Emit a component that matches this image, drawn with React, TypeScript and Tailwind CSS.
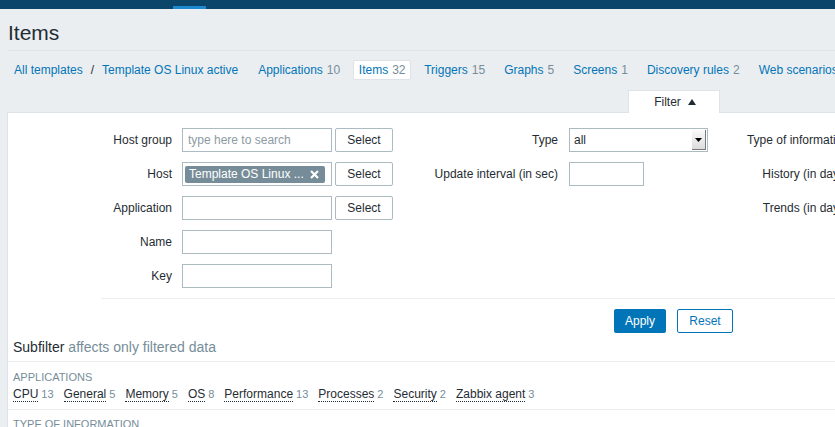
import React from 'react';

const navItems = [
  { name: 'Applications', count: '10' },
  { name: 'Items', count: '32', active: true },
  { name: 'Triggers', count: '15', afterActive: true },
  { name: 'Graphs', count: '5', afterActive: true },
  { name: 'Screens', count: '1', afterActive: true },
  { name: 'Discovery rules', count: '2', afterActive: true },
  { name: 'Web scenarios', count: '', afterActive: true },
];

const apps = [
  { name: 'CPU', count: '13' },
  { name: 'General', count: '5' },
  { name: 'Memory', count: '5' },
  { name: 'OS', count: '8' },
  { name: 'Performance', count: '13' },
  { name: 'Processes', count: '2' },
  { name: 'Security', count: '2' },
  { name: 'Zabbix agent', count: '3' },
];

const Label = ({ text, w }: { text: string; w: string }) => (
  <div className={`${w} shrink-0 text-right whitespace-nowrap`}>{text}</div>
);

const SelectBtn = () => (
  <button className="ml-[3px] w-[58px] h-[24px] border border-[#acbbc2] bg-white text-[#1f2c33] text-[12px] rounded-[2px]">
    Select
  </button>
);

const App = () => {
  return (
    <div className="w-[835px] h-[427px] overflow-hidden bg-[#ebeef1] font-['Liberation_Sans',Arial,sans-serif] text-[12px] text-[#1f2c33]">
      {/* top bar */}
      <div className="h-[9px] bg-[#0b466a] flex items-end pl-[173px]">
        <div className="w-[33px] h-[3px] bg-[#1b88d0]" />
      </div>

      {/* title */}
      <div className="ml-[7px] h-[42px] pt-[13px] pl-[1px] border-b border-[#dde3e7]">
        <h1 className="text-[21px] leading-[21px] text-[#1f2c33]">Items</h1>
      </div>

      {/* navigation */}
      <div className="pt-[9px] pl-[8px] flex items-center whitespace-nowrap h-[20px] box-content">
        <a className="shrink-0 px-[6px] h-[20px] flex items-center text-[#0275b8]">All templates</a>
        <span className="shrink-0 text-[#1f2c33] mx-[2px]">/</span>
        <a className="shrink-0 px-[6px] h-[20px] flex items-center text-[#0275b8]">Template OS Linux active</a>
        {navItems.map((n) => (
          <div
            key={n.name}
            className={`shrink-0 h-[20px] flex items-center gap-[4px] ${
              n.active
                ? 'ml-[7px] w-[58px] justify-center bg-white border border-[#dde3e7] rounded-[2px]'
                : n.afterActive
                ? 'ml-[7px] px-[6px]'
                : 'ml-[8px] px-[6px]'
            }`}
          >
            <span className="text-[#0275b8]">{n.name}</span>
            {n.count && <span className="text-[#768d99]">{n.count}</span>}
          </div>
        ))}
      </div>

      {/* filter tab */}
      <div className="mt-[10px] ml-[628px] w-[92px] h-[23px] bg-white border border-b-0 border-[#dde3e7] relative z-10 -mb-[1px] flex items-center justify-center gap-[7px] pl-[2px]">
        <span className="text-[#1f2c33]">Filter</span>
        <svg width="8" height="6" viewBox="0 0 8 6">
          <path d="M0 6 L4 0 L8 6 Z" fill="#1f2c33" />
        </svg>
      </div>

      {/* panel */}
      <div className="ml-[7px] bg-white border-l border-t border-[#dde3e7] h-[400px]">
        <div className="ml-[93px] pt-[15px] pb-[10px] border-b border-[#ebeef1] flex whitespace-nowrap">
          {/* col 1 */}
          <div className="w-[292px] shrink-0 flex flex-col gap-[10px]">
            <div className="h-[24px] flex items-center">
              <Label text="Host group" w="w-[71px]" />
              <input
                className="ml-[10px] w-[150px] h-[24px] border border-[#acbbc2] px-[5px] text-[12px] placeholder:text-[#8c9ba3] outline-none"
                placeholder="type here to search"
              />
              <SelectBtn />
            </div>
            <div className="h-[24px] flex items-center">
              <Label text="Host" w="w-[71px]" />
              <div className="ml-[10px] w-[150px] h-[24px] border border-[#acbbc2] flex items-center pl-[2px]">
                <div className="w-[140px] h-[17px] bg-[#768d99] rounded-[2px] flex items-center justify-between pl-[4px] pr-[6px] text-white">
                  <span>Template OS Linux ...</span>
                  <svg width="9" height="9" viewBox="0 0 9 9">
                    <path d="M1 1 L8 8 M8 1 L1 8" stroke="white" strokeWidth="2.2" />
                  </svg>
                </div>
              </div>
              <SelectBtn />
            </div>
            <div className="h-[24px] flex items-center">
              <Label text="Application" w="w-[71px]" />
              <input className="ml-[10px] w-[150px] h-[24px] border border-[#acbbc2] px-[5px] outline-none" />
              <SelectBtn />
            </div>
            <div className="h-[24px] flex items-center">
              <Label text="Name" w="w-[71px]" />
              <input className="ml-[10px] w-[150px] h-[24px] border border-[#acbbc2] px-[5px] outline-none" />
            </div>
            <div className="h-[24px] flex items-center">
              <Label text="Key" w="w-[71px]" />
              <input className="ml-[10px] w-[150px] h-[24px] border border-[#acbbc2] px-[5px] outline-none" />
            </div>
          </div>

          {/* col 2 */}
          <div className="w-[315px] shrink-0 flex flex-col gap-[10px]">
            <div className="h-[24px] flex items-center">
              <Label text="Type" w="w-[165px]" />
              <div className="ml-[11px] w-[139px] h-[24px] border border-[#acbbc2] flex items-center justify-between pl-[4px] pr-[1px]">
                <span>all</span>
                <div className="w-[14px] h-[20px] bg-gradient-to-b from-[#fafafa] to-[#dcdcdc] border-r border-b border-[#7a7a7a] flex items-center justify-center">
                  <svg width="7" height="4" viewBox="0 0 7 4">
                    <path d="M0 0 L7 0 L3.5 4 Z" fill="#000" />
                  </svg>
                </div>
              </div>
            </div>
            <div className="h-[24px] flex items-center">
              <Label text="Update interval (in sec)" w="w-[165px]" />
              <input className="ml-[11px] w-[75px] h-[24px] border border-[#acbbc2] px-[5px] outline-none" />
            </div>
          </div>

          {/* col 3 */}
          <div className="w-[200px] shrink-0 flex flex-col gap-[10px]">
            <div className="h-[24px] flex items-center">
              <Label text="Type of information" w="w-[141px]" />
            </div>
            <div className="h-[24px] flex items-center">
              <Label text="History (in days)" w="w-[141px]" />
            </div>
            <div className="h-[24px] flex items-center">
              <Label text="Trends (in days)" w="w-[141px]" />
            </div>
          </div>
        </div>

        {/* buttons */}
        <div className="ml-[93px] pt-[10px] pl-[513px] flex gap-[11px]">
          <button className="w-[52px] h-[24px] bg-[#0275b8] text-white rounded-[2px] text-[12px]">Apply</button>
          <button className="w-[56px] h-[24px] border border-[#0275b8] text-[#0275b8] bg-white rounded-[2px] text-[12px]">
            Reset
          </button>
        </div>

        {/* subfilter */}
        <div className="h-[29px] pl-[5px] flex items-center border-b border-[#ebeef1] text-[14px] whitespace-nowrap">
          <span className="text-[#1f2c33]">Subfilter</span>
          <span className="ml-[4px] text-[#768d99]">affects only filtered data</span>
        </div>
        <div className="pl-[5px] pt-[9px] pb-[7px] border-b border-[#ebeef1]">
          <div className="text-[11px] leading-[13px] text-[#768d99]">APPLICATIONS</div>
          <div className="mt-[2px] flex gap-[10px] leading-[16px] whitespace-nowrap">
            {apps.map((a) => (
              <div key={a.name} className="flex items-center gap-[3px]">
                <span className="border-b border-dotted border-[#1f2c33] leading-[14px]">{a.name}</span>
                <span className="text-[#768d99] text-[11px]">{a.count}</span>
              </div>
            ))}
          </div>
        </div>
        <div className="pl-[5px] pt-[8px] text-[11px] leading-[13px] text-[#768d99]">TYPE OF INFORMATION</div>
      </div>
    </div>
  );
};

export default App;
